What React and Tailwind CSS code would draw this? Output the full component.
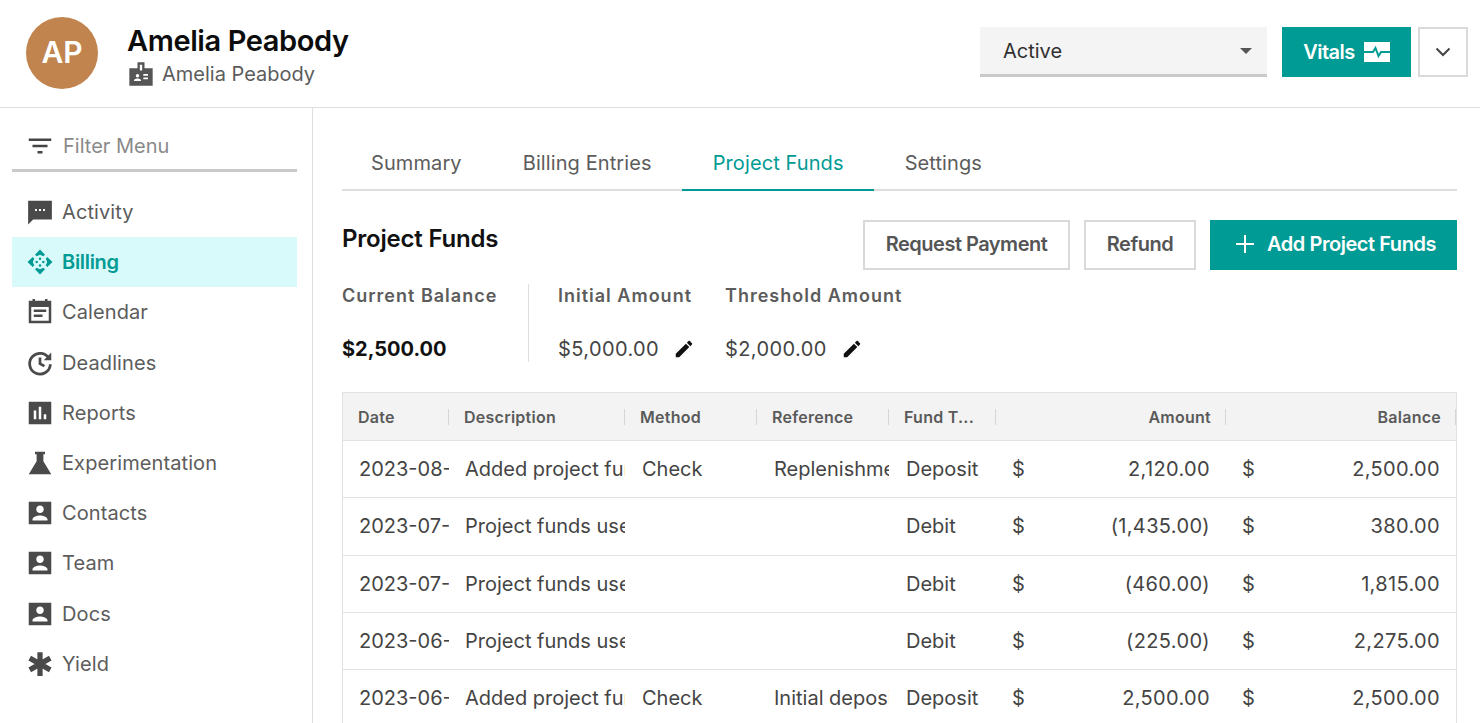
const P = ({ d, className = "w-[30px] h-[30px]", fill = "currentColor" }) => (
  <svg viewBox="0 0 24 24" className={className} fill={fill} fillRule="evenodd"><path d={d} /></svg>
);
const account = "M3 3h18v18H3zM15 9c0 1.66-1.34 3-3 3s-3-1.34-3-3 1.34-3 3-3 3 1.34 3 3zM6 17c0-2 4-3.1 6-3.1s6 1.1 6 3.1v1H6z";
const Activity = () => <P d="M2.5 3h19v15H6.5l-4 4zM8 9.5h1.6v1.6H8zM11.2 9.5h1.6v1.6h-1.6zM14.4 9.5H16v1.6h-1.6z" />;
const Billing = () => (
  <svg viewBox="0 0 24 24" className="w-[30px] h-[30px]" fill="currentColor">
    <path d="M12 2l4 4.2-1.4 1.2L12 6.2 9.4 7.4 8 6.2zM12 22l-4-4.2 1.4-1.2 2.6 1.2 2.6-1.2 1.4 1.2zM2 12l4.2-4 1.2 1.4L6.2 12l1.2 2.6L6.2 16zM22 12l-4.2 4-1.2-1.4 1.2-2.6-1.2-2.6L17.800 8z" />
    <circle cx="12" cy="9.300" r="1" /><circle cx="12" cy="14.700" r="1" /><circle cx="9.300" cy="12" r="1" /><circle cx="14.700" cy="12" r="1" />
  </svg>
);
const Calendar = () => <P d="M6 1.500h2V3h8V1.500h2V3h3v18H3V3h3zM5 8v11h14V8zM7 10h10v2H7zM7 14h7v2H7z" />;
const Deadlines = () => (
  <svg viewBox="0 0 24 24" className="w-[30px] h-[30px]" fill="none" stroke="currentColor" strokeWidth="2.200">
    <path d="M19.500 9A8.300 8.300 0 1 0 20.300 13" />
    <path d="M12 7.500V12.500L15.500 14.500" />
    <path d="M21 3.500V9.800H15z" fill="currentColor" stroke="none" />
  </svg>
);
const Reports = () => <P d="M3 3h18v18H3zM7 10h2v7H7zM11 7h2v10h-2zM15 13h2v4h-2z" />;
const Flask = () => <P d="M8 3h8v2h-1.300v5.500L21 21H3l6.300-10.500V5H8z" />;
const Contact = () => <P d={account} />;
const Yield = () => (
  <svg viewBox="0 0 24 24" className="w-[30px] h-[30px]" stroke="currentColor" strokeWidth="4.200">
    <path d="M12 2.500V21.500M3.800 7.300L20.200 16.700M3.800 16.700L20.200 7.300" />
  </svg>
);
const Pencil = () => <P className="w-[22px] h-[22px] text-[#111]" d="M3 17.250V21h3.750L17.810 9.940l-3.750-3.750L3 17.250zM20.710 7.040c.39-.39.39-1.020 0-1.410l-2.340-2.340c-.39-.39-1.020-.39-1.410 0l-1.830 1.830 3.750 3.750 1.830-1.830z" />;

const nav = [
  ["Activity", Activity], ["Billing", Billing], ["Calendar", Calendar], ["Deadlines", Deadlines], ["Reports", Reports],
  ["Experimentation", Flask], ["Contacts", Contact], ["Team", Contact], ["Docs", Contact], ["Yield", Yield],
];
const heads = [["Date"], ["Description"], ["Method"], ["Reference"], ["Fund T..."], ["Amount", 1], ["Balance", 1]];
const rows = [
  ["2023-08-15", "Added project funds", "Check", "Replenishment", "Deposit", "2,120.00", "2,500.00"],
  ["2023-07-28", "Project funds used", "", "", "Debit", "(1,435.00)", "380.00"],
  ["2023-07-14", "Project funds used", "", "", "Debit", "(460.00)", "1,815.00"],
  ["2023-06-30", "Project funds used", "", "", "Debit", "(225.00)", "2,275.00"],
  ["2023-06-12", "Added project funds", "Check", "Initial deposit", "Deposit", "2,500.00", "2,500.00"],
];
const grid = "grid grid-cols-[106px_176px_132px_132px_107px_230px_230px]";
const labelCls = "text-[18px] font-semibold leading-[24px] tracking-[1px] text-[#5c5c5c]";

export default function App() {
  return (
    <div className="h-[723px] w-[1480px] overflow-hidden bg-white text-[20px] font-['Inter',sans-serif]">
      <header className="flex h-[108px] items-center border-b border-[#dedede] pl-[26px] pr-[12px]">
        <div className="mb-[2px] flex h-[72px] w-[72px] items-center justify-center rounded-full bg-[#c1844f] text-[30px] font-semibold text-white">AP</div>
        <div className="ml-[29px] mt-[2px]">
          <div className="text-[29px] font-semibold leading-[39px] tracking-[-0.4px] text-[#0c0c0c]">Amelia Peabody</div>
          <div className="flex items-center gap-[7px] text-[#5c5c5c]">
            <P className="h-[28px] w-[28px] text-[#555]" d="M2 7h7V2h6v5h7v15H2zM11 4v5h2V4zM9 12a1.500 1.500 0 1 1 0 3 1.500 1.500 0 0 1 0-3zM12 18H6v-.750c0-1 2-1.500 3-1.500s3 .500 3 1.500zM18 16.500h-4V15h4zM18 13.500h-4V12h4z" />
            <span className="leading-[28px]">Amelia Peabody</span>
          </div>
        </div>
        <div className="ml-auto mb-[4px] flex items-center">
          <div className="flex h-[50px] w-[287px] items-center justify-between border-b-[3px] border-[#c9c9c9] bg-[#f4f4f4] pl-[23px] pr-[15px] pt-[2px] text-[#303030]">
            <span>Active</span>
            <span className="h-0 w-0 border-x-[6px] border-t-[6px] border-x-transparent border-t-[#555]" />
          </div>
          <button className="ml-[15px] flex h-[50px] w-[129px] items-center justify-center gap-[9px] bg-[#009b94] font-semibold tracking-[-0.5px] text-white">
            Vitals
            <svg viewBox="0 0 26 20" className="h-[20px] w-[26px]">
              <rect width="26" height="20" fill="#fff" />
              <path d="M0 10H9L11.500 6 14.500 14 17 10H26" fill="none" stroke="#009b94" strokeWidth="2" />
            </svg>
          </button>
          <button className="ml-[7px] flex h-[50px] w-[50px] items-center justify-center border-2 border-[#d9d9d9] text-[#444]">
            <svg viewBox="0 0 16 10" className="h-[10px] w-[16px]" fill="none" stroke="currentColor" strokeWidth="2"><path d="M1.500 1.500L8 8l6.500-6.500" /></svg>
          </button>
        </div>
      </header>
      <div className="flex h-[615px]">
        <aside className="w-[313px] shrink-0 border-r border-[#dedede]">
          <div className="mx-[12px] flex h-[64px] w-[285px] items-center gap-[8px] border-b-[3px] border-[#c9c9c9] pl-[13px] pt-[14px] text-[#8a8a8a]">
            <P className="h-[30px] w-[30px] text-[#444]" d="M10 18h4v-2h-4zM3 6v2h18V6zM6 13h12v-2H6z" />
            <span>Filter Menu</span>
          </div>
          <nav className="mt-[15px]">
            {nav.map(([label, Icon]) => (
              <div key={label} className={`mx-[12px] flex h-[50.2px] w-[285px] items-center gap-[7px] pl-[13px] ${label === "Billing" ? "bg-[#d9fafa] font-semibold tracking-[-0.3px] text-[#009b94]" : "tracking-[0.1px] text-[#5c5c5c]"}`}>
                <span className={label === "Billing" ? "text-[#009b94]" : "text-[#4a4a4a]"}><Icon /></span>
                <span>{label}</span>
              </div>
            ))}
          </nav>
        </aside>
        <main className="w-[1167px] pl-[29px] pr-[23px]">
          <div className="flex h-[83px] items-end border-b-2 border-[#dedede]">
            <div className="-ml-[1.5px] flex">
              {["Summary", "Billing Entries", "Project Funds", "Settings"].map((t) => (
                <div key={t} className={`-mb-[2px] flex h-[55px] items-center border-b-2 px-[30.5px] tracking-[0.1px] ${t === "Project Funds" ? "border-[#009b94] text-[#009b94]" : "border-transparent text-[#5c5c5c]"}`}>{t}</div>
              ))}
            </div>
          </div>
          <div className="mt-[29px] flex items-start justify-between">
            <h2 className="pt-[1px] text-[24px] font-semibold leading-[36px] tracking-[-0.2px] text-[#111]">Project Funds</h2>
            <div className="flex gap-[14px]">
              <button className="h-[50px] w-[207px] border-2 border-[#d9d9d9] pb-[2px] font-semibold tracking-[-0.5px] text-[#555]">Request Payment</button>
              <button className="h-[50px] w-[112px] border-2 border-[#d9d9d9] pb-[2px] font-semibold tracking-[-0.5px] text-[#555]">Refund</button>
              <button className="flex h-[50px] w-[247px] items-center justify-center gap-[13px] bg-[#009b94] pb-[2px] pl-[5px] font-semibold tracking-[-0.45px] text-white">
                <svg viewBox="0 0 18 18" className="h-[18px] w-[18px]" stroke="currentColor" strokeWidth="2"><path d="M9 0V18M0 9H18" /></svg>
                Add Project Funds
              </button>
            </div>
          </div>
          <div className="mt-[14px] flex h-[78px]">
            <div className="w-[187px] border-r border-[#dedede]">
              <div className={labelCls}>Current Balance</div>
              <div className="mt-[27px] font-bold leading-[28px] text-[#111]">$2,500.00</div>
            </div>
            <div className="w-[196px] pl-[29px]">
              <div className={labelCls}>Initial Amount</div>
              <div className="mt-[27px] flex items-center gap-[14px] leading-[28px] tracking-[0.4px] text-[#444]">$5,000.00 <Pencil /></div>
            </div>
            <div>
              <div className={labelCls}>Threshold Amount</div>
              <div className="mt-[27px] flex items-center gap-[14px] leading-[28px] tracking-[0.4px] text-[#444]">$2,000.00 <Pencil /></div>
            </div>
          </div>
          <div className="mt-[30px] w-[1115px] border-x border-t border-[#e2e2e2]">
            <div className={`${grid} h-[48px] items-center border-b border-[#e2e2e2] bg-[#f3f3f3] text-[16px] font-semibold tracking-[0.25px] text-[#5a5a5a]`}>
              {heads.map(([h, right]) => (
                <div key={h} className={`flex h-[16px] items-center border-r border-[#d6d6d6] leading-[16px] ${right ? "justify-end pr-[14px]" : "pl-[15px]"}`}>{h}</div>
              ))}
            </div>
            {rows.map((r, i) => (
              <div key={i} className={`${grid} h-[57.33px] items-center border-b border-[#e2e2e2] text-[#444]`}>
                {r.slice(0, 5).map((c, j) => (
                  <div key={j} className={`overflow-hidden whitespace-nowrap ${j < 2 ? "pl-[16px]" : "pl-[17px]"}`}>{c}</div>
                ))}
                {r.slice(5).map((c, j) => (
                  <div key={j} className="flex justify-between px-[16px] tracking-[0.35px]"><span>$</span><span>{c}</span></div>
                ))}
              </div>
            ))}
          </div>
        </main>
      </div>
    </div>
  );
}
